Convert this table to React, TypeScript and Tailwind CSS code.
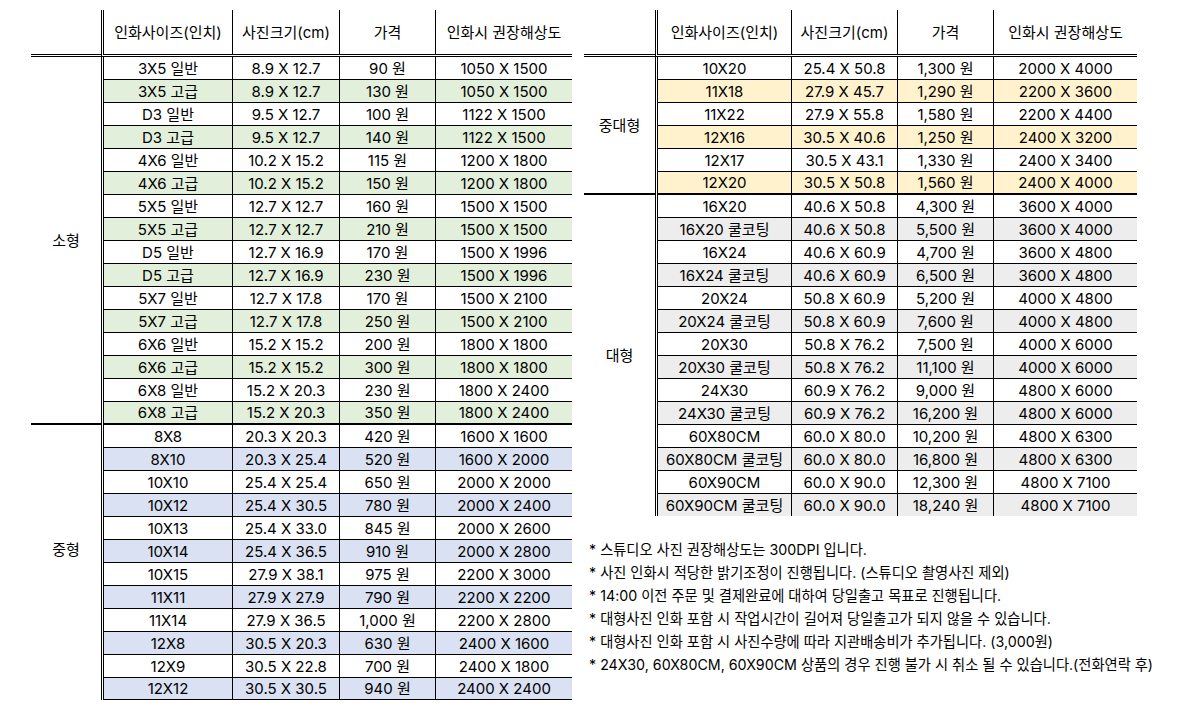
type Row = [string, string, string, string]

type Section = {
  label: string
  tint: string
  rows: Row[]
  labelPad?: string
}

const small: Row[] = [
  ['3X5 일반', '8.9 X 12.7', '90 원', '1050 X 1500'],
  ['3X5 고급', '8.9 X 12.7', '130 원', '1050 X 1500'],
  ['D3 일반', '9.5 X 12.7', '100 원', '1122 X 1500'],
  ['D3 고급', '9.5 X 12.7', '140 원', '1122 X 1500'],
  ['4X6 일반', '10.2 X 15.2', '115 원', '1200 X 1800'],
  ['4X6 고급', '10.2 X 15.2', '150 원', '1200 X 1800'],
  ['5X5 일반', '12.7 X 12.7', '160 원', '1500 X 1500'],
  ['5X5 고급', '12.7 X 12.7', '210 원', '1500 X 1500'],
  ['D5 일반', '12.7 X 16.9', '170 원', '1500 X 1996'],
  ['D5 고급', '12.7 X 16.9', '230 원', '1500 X 1996'],
  ['5X7 일반', '12.7 X 17.8', '170 원', '1500 X 2100'],
  ['5X7 고급', '12.7 X 17.8', '250 원', '1500 X 2100'],
  ['6X6 일반', '15.2 X 15.2', '200 원', '1800 X 1800'],
  ['6X6 고급', '15.2 X 15.2', '300 원', '1800 X 1800'],
  ['6X8 일반', '15.2 X 20.3', '230 원', '1800 X 2400'],
  ['6X8 고급', '15.2 X 20.3', '350 원', '1800 X 2400'],
]

const medium: Row[] = [
  ['8X8', '20.3 X 20.3', '420 원', '1600 X 1600'],
  ['8X10', '20.3 X 25.4', '520 원', '1600 X 2000'],
  ['10X10', '25.4 X 25.4', '650 원', '2000 X 2000'],
  ['10X12', '25.4 X 30.5', '780 원', '2000 X 2400'],
  ['10X13', '25.4 X 33.0', '845 원', '2000 X 2600'],
  ['10X14', '25.4 X 36.5', '910 원', '2000 X 2800'],
  ['10X15', '27.9 X 38.1', '975 원', '2200 X 3000'],
  ['11X11', '27.9 X 27.9', '790 원', '2200 X 2200'],
  ['11X14', '27.9 X 36.5', '1,000 원', '2200 X 2800'],
  ['12X8', '30.5 X 20.3', '630 원', '2400 X 1600'],
  ['12X9', '30.5 X 22.8', '700 원', '2400 X 1800'],
  ['12X12', '30.5 X 30.5', '940 원', '2400 X 2400'],
]

const midLarge: Row[] = [
  ['10X20', '25.4 X 50.8', '1,300 원', '2000 X 4000'],
  ['11X18', '27.9 X 45.7', '1,290 원', '2200 X 3600'],
  ['11X22', '27.9 X 55.8', '1,580 원', '2200 X 4400'],
  ['12X16', '30.5 X 40.6', '1,250 원', '2400 X 3200'],
  ['12X17', '30.5 X 43.1', '1,330 원', '2400 X 3400'],
  ['12X20', '30.5 X 50.8', '1,560 원', '2400 X 4000'],
]

const large: Row[] = [
  ['16X20', '40.6 X 50.8', '4,300 원', '3600 X 4000'],
  ['16X20 쿨코팅', '40.6 X 50.8', '5,500 원', '3600 X 4000'],
  ['16X24', '40.6 X 60.9', '4,700 원', '3600 X 4800'],
  ['16X24 쿨코팅', '40.6 X 60.9', '6,500 원', '3600 X 4800'],
  ['20X24', '50.8 X 60.9', '5,200 원', '4000 X 4800'],
  ['20X24 쿨코팅', '50.8 X 60.9', '7,600 원', '4000 X 4800'],
  ['20X30', '50.8 X 76.2', '7,500 원', '4000 X 6000'],
  ['20X30 쿨코팅', '50.8 X 76.2', '11,100 원', '4000 X 6000'],
  ['24X30', '60.9 X 76.2', '9,000 원', '4800 X 6000'],
  ['24X30 쿨코팅', '60.9 X 76.2', '16,200 원', '4800 X 6000'],
  ['60X80CM', '60.0 X 80.0', '10,200 원', '4800 X 6300'],
  ['60X80CM 쿨코팅', '60.0 X 80.0', '16,800 원', '4800 X 6300'],
  ['60X90CM', '60.0 X 90.0', '12,300 원', '4800 X 7100'],
  ['60X90CM 쿨코팅', '60.0 X 90.0', '18,240 원', '4800 X 7100'],
]

const notes = [
  '* 스튜디오 사진 권장해상도는 300DPI 입니다.',
  '* 사진 인화시 적당한 밝기조정이 진행됩니다. (스튜디오 촬영사진 제외)',
  '* 14:00 이전 주문 및 결제완료에 대하여 당일출고 목표로 진행됩니다.',
  '* 대형사진 인화 포함 시 작업시간이 길어져 당일출고가 되지 않을 수 있습니다.',
  '* 대형사진 인화 포함 시 사진수량에 따라 지관배송비가 추가됩니다. (3,000원)',
  '* 24X30, 60X80CM, 60X90CM 상품의 경우 진행 불가 시 취소 될 수 있습니다.(전화연락 후)',
]

const headers = ['인화사이즈(인치)', '사진크기(cm)', '가격', '인화시 권장해상도']

function PriceTable({
  catWidth,
  cols,
  sections,
  closed,
}: {
  catWidth: string
  cols: string[]
  sections: Section[]
  closed: boolean
}) {
  return (
    <div className="flex flex-col">
      {/* header */}
      <div className="flex h-[47px]">
        <div className={`${catWidth} border-b-[3px] border-double border-black`} />
        <div className="flex border-l-[3px] border-b-[3px] border-double border-black">
          {headers.map((h, i) => (
            <div
              key={h}
              className={`${cols[i]} flex items-center justify-center ${i < 3 ? 'border-r border-black' : ''}`}
            >
              {h}
            </div>
          ))}
        </div>
      </div>

      {sections.map((s, si) => {
        const lastSection = si === sections.length - 1
        return (
          <div key={s.label} className="flex">
            <div
              className={`${catWidth} flex items-center justify-center ${s.labelPad ?? ''} ${
                lastSection ? '' : 'border-b-2 border-black'
              }`}
            >
              {s.label}
            </div>
            <div className="flex flex-col border-l-[3px] border-double border-black">
              {s.rows.map((r, ri) => {
                const lastRow = ri === s.rows.length - 1
                let bottom = 'h-[23px] border-b border-black'
                if (lastRow && !lastSection) bottom = 'h-[23px] border-b-2 border-black'
                if (lastRow && lastSection) bottom = closed ? 'h-[22px] border-b border-black' : 'h-[22px]'
                return (
                  <div key={r[0]} className={`flex ${bottom} ${ri % 2 === 1 ? s.tint : 'bg-white'}`}>
                    {r.map((c, ci) => (
                      <div
                        key={ci}
                        className={`${cols[ci]} flex items-center justify-center ${
                          ci < 3 ? 'border-r border-black' : ''
                        }`}
                      >
                        {c}
                      </div>
                    ))}
                  </div>
                )
              })}
            </div>
          </div>
        )
      })}
    </div>
  )
}

export default function App() {
  return (
    <div
      className="flex items-start bg-white pl-[31px] pt-[10px] text-[15px] leading-none text-black"
      style={{ fontFamily: 'Inter, "Noto Sans CJK KR", sans-serif' }}
    >
      <PriceTable
        catWidth="w-[70px]"
        cols={['w-[129px]', 'w-[107px]', 'w-[96px]', 'w-[136px]']}
        closed
        sections={[
          { label: '소형', tint: 'bg-[#e2efda]', rows: small },
          { label: '중형', tint: 'bg-[#d9e1f2]', rows: medium, labelPad: 'pb-[26px]' },
        ]}
      />

      <div className="ml-[12px] flex flex-col">
        <PriceTable
          catWidth="w-[71px]"
          cols={['w-[134px]', 'w-[106px]', 'w-[96px]', 'w-[143px]']}
          closed={false}
          sections={[
            { label: '중대형', tint: 'bg-[#fff2cc]', rows: midLarge },
            { label: '대형', tint: 'bg-[#ededed]', rows: large },
          ]}
        />
        <ul className="mt-[23px] ml-[5px] flex flex-col text-[14.25px]">
          {notes.map((n) => (
            <li key={n} className="h-[23px] flex items-center whitespace-nowrap">
              {n}
            </li>
          ))}
        </ul>
      </div>
    </div>
  )
}
